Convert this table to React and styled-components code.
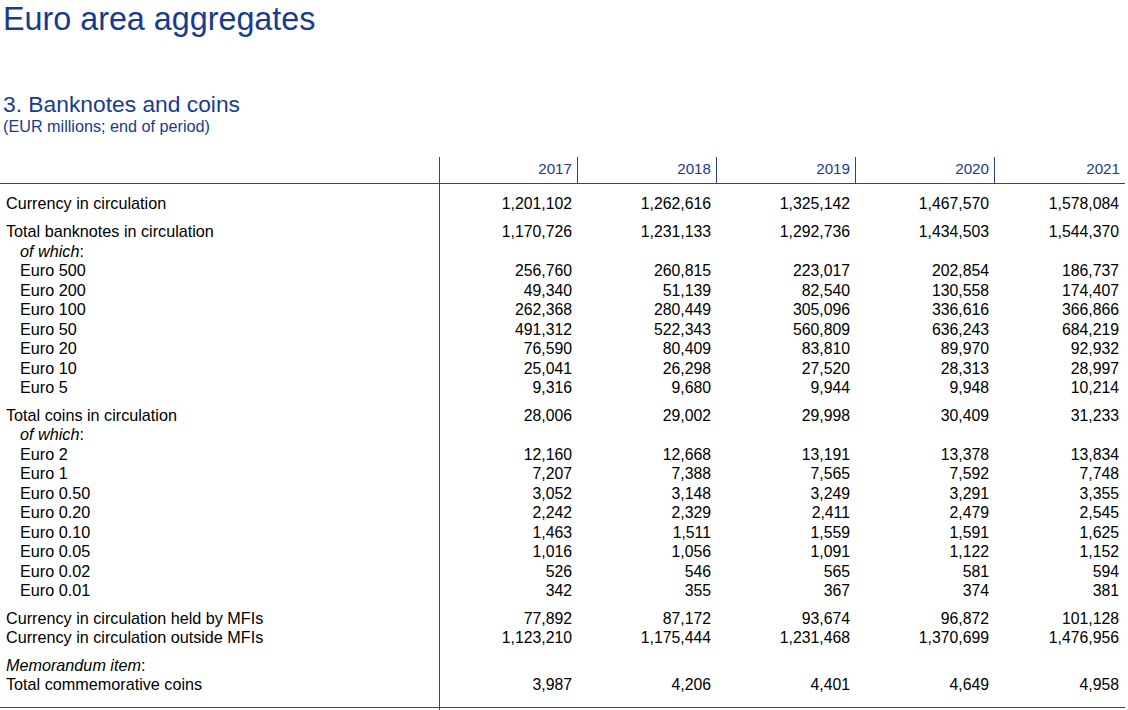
import React from 'react';
import styled, { createGlobalStyle } from 'styled-components';

const BLUE = '#183b8f';
const LINE = '#2c4490';
const COLS = '440px 138px 139px 139px 139px 130px';

const GlobalStyle = createGlobalStyle`
  html, body { margin: 0; padding: 0; background: #fff; }
  body { font-family: "Liberation Sans", Arial, sans-serif; color: #000; }
`;

const Page = styled.div`
  width: 1128px;
  height: 710px;
  overflow: hidden;
`;

const Title = styled.h1`
  margin: 0;
  padding-left: 3px;
  font-size: 32.3px;
  line-height: 38px;
  font-weight: 400;
  color: ${BLUE};
`;

const SectionTitle = styled.h2`
  margin: 53px 0 0;
  padding-left: 3px;
  font-size: 22.8px;
  line-height: 26px;
  font-weight: 400;
  color: ${BLUE};
`;

const Subtitle = styled.p`
  margin: 0;
  padding-left: 3px;
  font-size: 16.2px;
  line-height: 18px;
  color: ${BLUE};
`;

const Table = styled.div`
  margin-top: 22px;
  width: 1125px;
`;

const HeaderRow = styled.div`
  display: grid;
  grid-template-columns: ${COLS};
  height: 26px;
  border-bottom: 1px solid ${LINE};
`;

const HeaderStub = styled.div`
  border-right: 1px solid ${LINE};
`;

const Year = styled.div`
  padding: 3px 5px 0 0;
  text-align: right;
  font-size: 15.2px;
  line-height: 17px;
  color: ${BLUE};
  border-right: ${p => (p.$last ? 'none' : `1px solid ${LINE}`)};
`;

const Row = styled.div`
  display: grid;
  grid-template-columns: ${COLS};
  font-size: 16.2px;
  line-height: 19.5px;
  & > * {
    padding-top: ${p => p.$top || 0}px;
    padding-bottom: ${p => p.$bottom || 0}px;
  }
  ${p => (p.$rule ? `border-bottom: 1px solid ${LINE};` : '')}
`;

const Label = styled.div`
  border-right: 1px solid ${LINE};
  padding-left: ${p => (p.$indent ? 20 : 6)}px;
  white-space: nowrap;
`;

const Value = styled.div`
  text-align: right;
  padding-right: 6px;
  font-size: 15.8px;
`;

const Tail = styled.div`
  display: grid;
  grid-template-columns: ${COLS};
  height: 4px;
`;

const years = ['2017', '2018', '2019', '2020', '2021'];

const rows = [
  { label: 'Currency in circulation', v: ['1,201,102', '1,262,616', '1,325,142', '1,467,570', '1,578,084'], top: 9.5 },
  { label: 'Total banknotes in circulation', v: ['1,170,726', '1,231,133', '1,292,736', '1,434,503', '1,544,370'], top: 9 },
  { label: 'of which', italic: true, indent: true },
  { label: 'Euro 500', indent: true, v: ['256,760', '260,815', '223,017', '202,854', '186,737'] },
  { label: 'Euro 200', indent: true, v: ['49,340', '51,139', '82,540', '130,558', '174,407'] },
  { label: 'Euro 100', indent: true, v: ['262,368', '280,449', '305,096', '336,616', '366,866'] },
  { label: 'Euro 50', indent: true, v: ['491,312', '522,343', '560,809', '636,243', '684,219'] },
  { label: 'Euro 20', indent: true, v: ['76,590', '80,409', '83,810', '89,970', '92,932'] },
  { label: 'Euro 10', indent: true, v: ['25,041', '26,298', '27,520', '28,313', '28,997'] },
  { label: 'Euro 5', indent: true, v: ['9,316', '9,680', '9,944', '9,948', '10,214'] },
  { label: 'Total coins in circulation', v: ['28,006', '29,002', '29,998', '30,409', '31,233'], top: 8 },
  { label: 'of which', italic: true, indent: true },
  { label: 'Euro 2', indent: true, v: ['12,160', '12,668', '13,191', '13,378', '13,834'] },
  { label: 'Euro 1', indent: true, v: ['7,207', '7,388', '7,565', '7,592', '7,748'] },
  { label: 'Euro 0.50', indent: true, v: ['3,052', '3,148', '3,249', '3,291', '3,355'] },
  { label: 'Euro 0.20', indent: true, v: ['2,242', '2,329', '2,411', '2,479', '2,545'] },
  { label: 'Euro 0.10', indent: true, v: ['1,463', '1,511', '1,559', '1,591', '1,625'] },
  { label: 'Euro 0.05', indent: true, v: ['1,016', '1,056', '1,091', '1,122', '1,152'] },
  { label: 'Euro 0.02', indent: true, v: ['526', '546', '565', '581', '594'] },
  { label: 'Euro 0.01', indent: true, v: ['342', '355', '367', '374', '381'] },
  { label: 'Currency in circulation held by MFIs', v: ['77,892', '87,172', '93,674', '96,872', '101,128'], top: 8 },
  { label: 'Currency in circulation outside MFIs', v: ['1,123,210', '1,175,444', '1,231,468', '1,370,699', '1,476,956'] },
  { label: 'Memorandum item', italic: true, top: 8 },
  { label: 'Total commemorative coins', v: ['3,987', '4,206', '4,401', '4,649', '4,958'], bottom: 12, rule: true },
];

export default function App() {
  return (
    <Page>
      <GlobalStyle />
      <Title>Euro area aggregates</Title>
      <SectionTitle>3. Banknotes and coins</SectionTitle>
      <Subtitle>(EUR millions; end of period)</Subtitle>
      <Table>
        <HeaderRow>
          <HeaderStub />
          {years.map((y, i) => (
            <Year key={y} $last={i === years.length - 1}>{y}</Year>
          ))}
        </HeaderRow>
        {rows.map((r, i) => (
          <Row key={i} $top={r.top} $bottom={r.bottom} $rule={r.rule}>
            <Label $indent={r.indent}>
              {r.italic ? (<><em>{r.label}</em>:</>) : r.label}
            </Label>
            {(r.v || ['', '', '', '', '']).map((v, j) => (
              <Value key={j}>{v}</Value>
            ))}
          </Row>
        ))}
        <Tail>
          <HeaderStub />
        </Tail>
      </Table>
    </Page>
  );
}
